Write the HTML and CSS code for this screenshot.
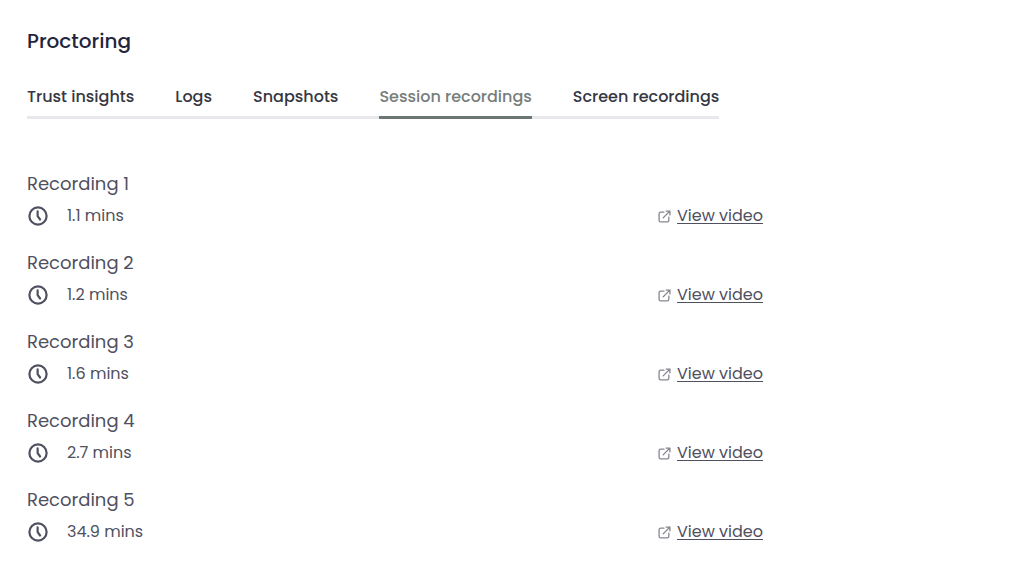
FILE: index.html
```html
<!DOCTYPE html>
<html lang="en">

<head>
    <meta charset="UTF-8">
    <meta name="viewport" content="width=device-width, initial-scale=1.0">
    <title>Proctoring</title>
    <link rel="stylesheet" href="styles.css">
</head>

<body>
    <svg class="sprite" aria-hidden="true">
        <symbol id="clock" viewBox="0 0 24 24">
            <circle cx="12" cy="12" r="9.4" />
            <path d="M11.600 7v5.200l2.700 3.600" />
        </symbol>
        <symbol id="external" viewBox="0 0 24 24">
            <path d="M11 4H5a3 3 0 0 0-3 3v12a3 3 0 0 0 3 3h12a3 3 0 0 0 3-3v-6" />
            <path d="M15 2h7v7M22 2L9.500 14.500" />
        </symbol>
    </svg>
    <main class="proctoring">
        <h1 class="title">Proctoring</h1>
        <div class="tabs" role="tablist">
            <button class="tab" type="button" role="tab">Trust insights</button>
            <button class="tab" type="button" role="tab">Logs</button>
            <button class="tab" type="button" role="tab">Snapshots</button>
            <button class="tab active" type="button" role="tab" aria-selected="true">Session recordings</button>
            <button class="tab" type="button" role="tab">Screen recordings</button>
        </div>
        <ul class="recordings">
            <li class="recording">
                <h2 class="name">Recording 1</h2>
                <div class="row">
                    <svg class="clock"><use href="#clock" /></svg>
                    <span class="duration">1.1 mins</span>
                    <a class="view" href="#"><svg class="external"><use href="#external" /></svg><span class="label">View video</span></a>
                </div>
            </li>
            <li class="recording">
                <h2 class="name">Recording 2</h2>
                <div class="row">
                    <svg class="clock"><use href="#clock" /></svg>
                    <span class="duration">1.2 mins</span>
                    <a class="view" href="#"><svg class="external"><use href="#external" /></svg><span class="label">View video</span></a>
                </div>
            </li>
            <li class="recording">
                <h2 class="name">Recording 3</h2>
                <div class="row">
                    <svg class="clock"><use href="#clock" /></svg>
                    <span class="duration">1.6 mins</span>
                    <a class="view" href="#"><svg class="external"><use href="#external" /></svg><span class="label">View video</span></a>
                </div>
            </li>
            <li class="recording">
                <h2 class="name">Recording 4</h2>
                <div class="row">
                    <svg class="clock"><use href="#clock" /></svg>
                    <span class="duration">2.7 mins</span>
                    <a class="view" href="#"><svg class="external"><use href="#external" /></svg><span class="label">View video</span></a>
                </div>
            </li>
            <li class="recording">
                <h2 class="name">Recording 5</h2>
                <div class="row">
                    <svg class="clock"><use href="#clock" /></svg>
                    <span class="duration">34.9 mins</span>
                    <a class="view" href="#"><svg class="external"><use href="#external" /></svg><span class="label">View video</span></a>
                </div>
            </li>
        </ul>
    </main>
</body>

</html>
```
FILE: styles.css
```css
* {
    margin: 0;
    padding: 0;
    box-sizing: border-box;
}

body {
    background-color: #fff;
    color: #4f5060;
    font-family: Poppins, Inter, sans-serif;
    font-size: 16px;
    line-height: 24px;
}

.sprite {
    display: none;
}

.proctoring {
    max-width: 790px;
    padding: 25px 27px 0;
}

.title {
    color: #23253d;
    font-size: 20px;
    font-weight: 500;
    line-height: 32px;
}

.tabs {
    display: flex;
    width: fit-content;
    gap: 41px;
    margin-top: 28px;
    box-shadow: inset 0 -3px #e8e8ec;
}

.tab {
    padding-bottom: 7px;
    border: none;
    border-bottom: 3px solid transparent;
    background: none;
    color: #363742;
    font: inherit;
    font-weight: 500;
    white-space: nowrap;
    cursor: pointer;
}

.tab.active {
    color: #777d7b;
    border-color: #6c7672;
}

.recordings {
    margin-top: 51px;
    list-style: none;
}

.recording {
    margin-bottom: 21px;
}

.name {
    font-size: 18px;
    font-weight: 400;
    line-height: 28px;
}

.row {
    display: flex;
    align-items: center;
    margin-top: 6px;
}

svg {
    fill: none;
    stroke: currentColor;
    stroke-linecap: round;
    stroke-linejoin: round;
}

.clock {
    width: 22px;
    height: 22px;
    stroke-width: 2.4;
}

.duration {
    margin-left: 18px;
}

.view {
    display: flex;
    align-items: center;
    gap: 6px;
    margin-left: auto;
    color: inherit;
    text-decoration: none;
}

.label {
    text-decoration: underline;
    text-underline-offset: 2px;
    text-decoration-skip-ink: none;
}

.external {
    width: 13px;
    height: 13px;
    color: #858690;
    stroke-width: 2.4;
}
```
